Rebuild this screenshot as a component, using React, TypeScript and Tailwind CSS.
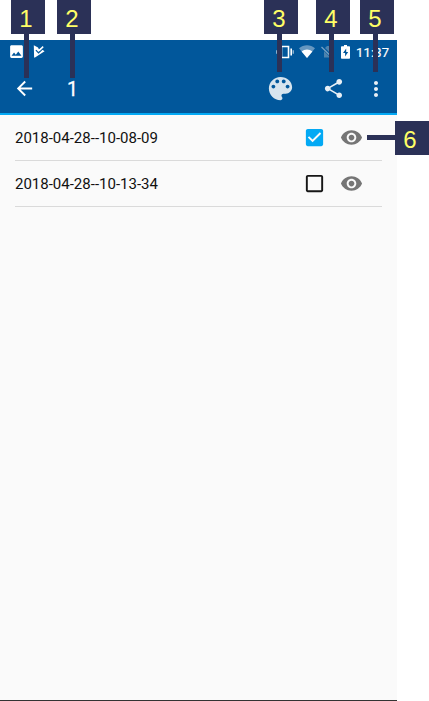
import React from "react";

type IconProps = { className: string; d: string };

const Icon = ({ className, d }: IconProps) => (
  <svg viewBox="0 0 24 24" fill="currentColor" className={"block shrink-0 " + className}>
    <path d={d} />
  </svg>
);

const BACK = "M20 11H7.83l5.59-5.59L12 4l-8 8 8 8 1.41-1.41L7.83 13H20v-2z";
const PALETTE =
  "M12 3c-4.97 0-9 4.03-9 9s4.03 9 9 9c.83 0 1.5-.67 1.5-1.5 0-.39-.15-.74-.39-1.01-.23-.26-.38-.61-.38-.99 0-.83.67-1.5 1.5-1.5H16c2.76 0 5-2.24 5-5 0-4.42-4.03-8-9-8zm-5.5 9c-.83 0-1.5-.67-1.5-1.5S5.67 9 6.5 9 8 9.67 8 10.5 7.33 12 6.5 12zm3-4C8.67 8 8 7.33 8 6.5S8.67 5 9.5 5s1.5.67 1.5 1.5S10.33 8 9.5 8zm5 0c-.83 0-1.5-.67-1.5-1.5S13.67 5 14.5 5s1.5.67 1.5 1.5S15.33 8 14.5 8zm3 4c-.83 0-1.5-.67-1.5-1.5S16.67 9 17.5 9s1.5.67 1.5 1.5-.67 1.5-1.5 1.5z";
const SHARE =
  "M18 16.08c-.76 0-1.44.3-1.96.77L8.91 12.7c.05-.23.09-.46.09-.7s-.04-.47-.09-.7l7.05-4.11c.54.5 1.25.81 2.04.81 1.66 0 3-1.34 3-3s-1.34-3-3-3-3 1.34-3 3c0 .24.04.47.09.7L8.04 9.81C7.5 9.31 6.79 9 6 9c-1.66 0-3 1.34-3 3s1.34 3 3 3c.79 0 1.5-.31 2.04-.81l7.12 4.16c-.05.21-.08.43-.08.65 0 1.61 1.31 2.92 2.92 2.92s2.92-1.31 2.92-2.92-1.31-2.92-2.92-2.92z";
const MORE =
  "M12 8c1.1 0 2-.9 2-2s-.9-2-2-2-2 .9-2 2 .9 2 2 2zm0 2c-1.1 0-2 .9-2 2s.9 2 2 2 2-.9 2-2-.9-2-2-2zm0 6c-1.1 0-2 .9-2 2s.9 2 2 2 2-.9 2-2-.9-2-2-2z";
const CHECKED =
  "M19 3H5c-1.11 0-2 .9-2 2v14c0 1.1.89 2 2 2h14c1.11 0 2-.9 2-2V5c0-1.1-.89-2-2-2zm-9 14l-5-5 1.41-1.41L10 14.17l7.59-7.59L19 8l-9 9z";
const UNCHECKED =
  "M19 5v14H5V5h14m0-2H5c-1.1 0-2 .9-2 2v14c0 1.1.9 2 2 2h14c1.1 0 2-.9 2-2V5c0-1.1-.9-2-2-2z";
const EYE =
  "M12 4.5C7 4.5 2.73 7.61 1 12c1.73 4.39 6 7.5 11 7.5s9.27-3.11 11-7.5c-1.73-4.39-6-7.5-11-7.5zM12 17c-2.76 0-5-2.24-5-5s2.24-5 5-5 5 2.24 5 5-2.24 5-5 5zm0-8c-1.66 0-3 1.34-3 3s1.34 3 3 3 3-1.34 3-3-1.34-3-3-3z";
const IMAGE =
  "M21 19V5c0-1.1-.9-2-2-2H5c-1.1 0-2 .9-2 2v14c0 1.1.9 2 2 2h14c1.1 0 2-.9 2-2zM8.5 13.5l2.5 3.01L14.5 12l4.5 6H5l3.5-4.5z";

const StatusBar = () => (
  <div className="flex h-[23px] items-center text-white">
    <Icon className="ml-[8px] size-[17px]" d={IMAGE} />
    <svg viewBox="0 0 12 13" className="ml-[8px] h-[13px] w-[12px] shrink-0">
      <path d="M.8 .3 5 2.6 6 4.6 7.5 3.6 11.6 6.2 2 12.6Q1.2 12.9 1.1 12Z" fill="#fff" />
      <path d="M2.9 5.2 5.5 7.8 10.5 3" fill="none" stroke="#01579b" strokeWidth="1.2" />
      <path d="M6 5.6 10.2 1.6" fill="none" stroke="#fff" strokeWidth="1.5" />
    </svg>
    <svg viewBox="0 0 18 14" className="ml-[231px] h-[14px] w-[18px] shrink-0">
      <path
        d="M5.5 1.5h7v11h-7zM2.6 3.5v7M15.2 3.5v7"
        fill="none"
        stroke="#fff"
        strokeWidth="1.6"
      />
      <path d="M.8 5.3v3.4M17.2 5.3v3.4" stroke="#b8cee1" strokeWidth="1.1" />
    </svg>
    <svg viewBox="0 0 16 13" className="mb-px ml-[5px] h-[13px] w-[16px] shrink-0">
      <path d="M0 3.3C4.5-.7 11.5-.7 16 3.3L8 13Z" fill="#6697c0" />
      <path d="M2.6 6.5C5.6 3.7 10.4 3.7 13.4 6.5L8 13Z" fill="#fff" />
    </svg>
    <svg viewBox="0 0 14 14" className="ml-[6px] h-[14px] w-[14px] shrink-0">
      <path d="M3 4 6 1h6v11.5H3Z" fill="#4d83ae" />
      <path d="M0 1 13 14" stroke="#01579b" strokeWidth="3" />
      <path d="M.5 2 12 13.2" stroke="#7aa3c4" strokeWidth="1.2" />
    </svg>
    <svg viewBox="0 0 9 14" className="ml-[6px] h-[14px] w-[9px] shrink-0">
      <path d="M3 0h3v1.2h2.2q.8 0 .8.8v11q0 .8-.8.8H.8Q0 13.8 0 13V2q0-.8.8-.8H3Z" fill="#fff" />
      <path d="M5.2 3.5 2 8h2.1v3.6L7.2 7H5.2Z" fill="#01579b" />
    </svg>
    <span className="ml-[6px] pt-px text-[13px] leading-none tracking-[0.2px] [-webkit-text-stroke:0.2px_white]">
      11:37
    </span>
  </div>
);

const Toolbar = () => (
  <div className="flex h-[50px] items-center pt-px text-[#e8eff5]">
    <Icon className="ml-[13px] size-[23px] text-white" d={BACK} />
    <span className="ml-[31px] w-[12px] pt-[2px] text-[19.5px] leading-none text-white [-webkit-text-stroke:0.3px_white]">
      1
    </span>
    <Icon className="ml-[186px] size-[31px] text-[#d7e4ee]" d={PALETTE} />
    <Icon className="ml-[26px] size-[23px]" d={SHARE} />
    <Icon className="ml-[19px] size-[24px]" d={MORE} />
  </div>
);

const Row = ({ name, checked }: { name: string; checked: boolean }) => (
  <div className="mx-[15px] flex h-[46px] items-center border-b-[1.5px] border-[#dadada]">
    <span className="w-[288px] whitespace-nowrap pt-[2px] text-[15px] leading-none text-[#111]">{name}</span>
    {checked ? (
      <Icon className="size-[23px] text-[#03a9f4]" d={CHECKED} />
    ) : (
      <Icon className="size-[23px] text-[#161616]" d={UNCHECKED} />
    )}
    <Icon className="ml-[14px] size-[23px] text-[#757575]" d={EYE} />
  </div>
);

const Callout = ({ label, box, stem }: { label: string; box: string; stem: string }) => (
  <>
    <div className={"absolute bg-[#2b3157] " + stem} />
    <div
      className={
        "absolute flex size-[34px] items-center justify-center bg-[#2b3157] pt-[3px] pr-[4px] font-['Liberation_Sans',sans-serif] text-[24px] leading-none text-[#ffff66] " +
        box
      }
    >
      {label}
    </div>
  </>
);

export default function App() {
  return (
    <div className="relative h-[701px] w-[429px] overflow-hidden bg-white pt-[40px] font-['Roboto',sans-serif]">
      <main className="flex h-[661px] w-[397px] flex-col border-b border-[#333] bg-[#fafafa]">
        <header className="h-[75px] border-b-2 border-[#03a9f4] bg-[#01579b]">
          <StatusBar />
          <Toolbar />
        </header>
        <Row name="2018-04-28--10-08-09" checked />
        <Row name="2018-04-28--10-13-34" checked={false} />
      </main>
      <Callout label="1" box="left-[11px] top-0" stem="left-[24px] top-[34px] h-[44px] w-[5px]" />
      <Callout label="2" box="left-[57px] top-0" stem="left-[70px] top-[34px] h-[44px] w-[5px]" />
      <Callout label="3" box="left-[264px] top-0" stem="left-[277px] top-[34px] h-[38px] w-[5px]" />
      <Callout label="4" box="left-[316px] top-0" stem="left-[329px] top-[34px] h-[38px] w-[5px]" />
      <Callout label="5" box="left-[360px] top-0" stem="left-[373px] top-[34px] h-[38px] w-[5px]" />
      <Callout label="6" box="left-[395px] top-[121px]" stem="left-[367px] top-[135px] h-[5px] w-[28px]" />
    </div>
  );
}
